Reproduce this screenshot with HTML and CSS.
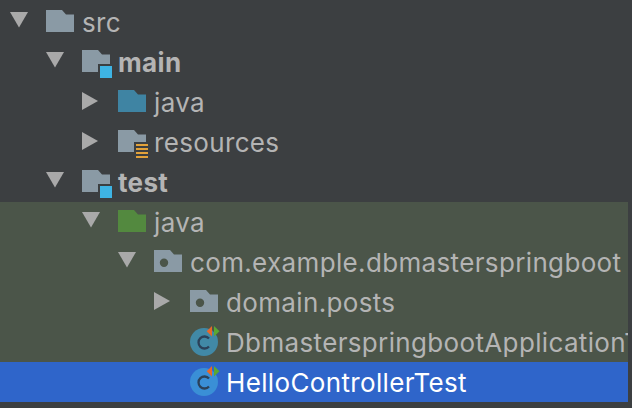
FILE: index.html
```html
<!DOCTYPE html>
<html lang="en">
<head>
  <meta charset="UTF-8" />
  <title>Project tree</title>
  <link rel="stylesheet" href="styles.css">
</head>
<body>
  <svg class="defs" width="0" height="0">
    <symbol id="arrow-down" viewBox="0 0 18 18"><path d="M0 0H18L9 15.5Z"/></symbol>
    <symbol id="arrow-right" viewBox="0 0 18 18"><path d="M0 0L16 9L0 18Z"/></symbol>
    <symbol id="folder" viewBox="0 0 28 22"><path d="M0 0H16L20 4.5H28V22H0Z"/></symbol>
    <symbol id="package" viewBox="0 0 28 22"><path fill-rule="evenodd" d="M0 0H16L20 4.5H28V22H0ZM10 8.5A4.2 4.2 0 1 0 10 16.9A4.2 4.2 0 1 0 10 8.5Z"/></symbol>
    <symbol id="class" viewBox="0 0 30 32">
      <circle cx="14" cy="16" r="14"/>
      <path d="M19 12.5A6 6 0 1 0 19 20.5" fill="none" stroke="#2b4159" stroke-width="2.3"/>
      <path d="M22 0V10.5L16.7 5.2Z" fill="#e8682a"/>
      <path d="M24 0L29.5 5.2L24 10.5Z" fill="#5aa832"/>
    </symbol>
  </svg>

  <ul class="tree">
    <li class="row depth-0">
      <svg class="arrow"><use href="#arrow-down"/></svg>
      <span class="icon">
        <svg class="folder-icon"><use href="#folder"/></svg>
      </span>
      <span class="label">src</span>
    </li>
    <li class="row depth-1">
      <svg class="arrow"><use href="#arrow-down"/></svg>
      <span class="icon">
        <svg class="folder-icon"><use href="#folder"/></svg>
        <span class="badge-module"></span>
      </span>
      <span class="label bold">main</span>
    </li>
    <li class="row depth-2">
      <svg class="arrow"><use href="#arrow-right"/></svg>
      <span class="icon">
        <svg class="folder-icon blue"><use href="#folder"/></svg>
      </span>
      <span class="label">java</span>
    </li>
    <li class="row depth-2">
      <svg class="arrow"><use href="#arrow-right"/></svg>
      <span class="icon">
        <svg class="folder-icon"><use href="#folder"/></svg>
        <span class="badge-resources"><i></i><i></i><i></i><i></i></span>
      </span>
      <span class="label">resources</span>
    </li>
    <li class="row depth-1">
      <svg class="arrow"><use href="#arrow-down"/></svg>
      <span class="icon">
        <svg class="folder-icon"><use href="#folder"/></svg>
        <span class="badge-module"></span>
      </span>
      <span class="label bold">test</span>
    </li>
    <li class="row depth-2 tinted">
      <svg class="arrow"><use href="#arrow-down"/></svg>
      <span class="icon">
        <svg class="folder-icon green"><use href="#folder"/></svg>
      </span>
      <span class="label">java</span>
    </li>
    <li class="row depth-3 tinted">
      <svg class="arrow"><use href="#arrow-down"/></svg>
      <span class="icon">
        <svg class="folder-icon"><use href="#package"/></svg>
      </span>
      <span class="label">com.example.dbmasterspringboot</span>
    </li>
    <li class="row depth-4 tinted">
      <svg class="arrow"><use href="#arrow-right"/></svg>
      <span class="icon">
        <svg class="folder-icon"><use href="#package"/></svg>
      </span>
      <span class="label">domain.posts</span>
    </li>
    <li class="row depth-4 tinted">
      <span class="arrow"></span>
      <span class="icon">
        <svg class="class-icon"><use href="#class"/></svg>
      </span>
      <span class="label">DbmasterspringbootApplicationTests</span>
    </li>
    <li class="row depth-4 selected">
      <span class="arrow"></span>
      <span class="icon">
        <svg class="class-icon"><use href="#class"/></svg>
      </span>
      <span class="label">HelloControllerTest</span>
    </li>
  </ul>
</body>
</html>
```

FILE: styles.css
```css
* {
  box-sizing: border-box;
  margin: 0;
  padding: 0;
}

body {
  width: 632px;
  height: 408px;
  overflow: hidden;
  background: #3c3f41;
  font-family: Inter, 'Liberation Sans', sans-serif;
  color: #b4b4b4;
}

.defs {
  display: block;
}

.tree {
  list-style: none;
  width: 628px;
  padding-top: 2px;
}

.row {
  display: flex;
  align-items: center;
  height: 40px;
  overflow: hidden;
  white-space: nowrap;
  font-size: 26px;
  letter-spacing: 0.35px;
}

.depth-0 { padding-left: 10px; }
.depth-1 { padding-left: 46px; }
.depth-2 { padding-left: 82px; }
.depth-3 { padding-left: 118px; }
.depth-4 { padding-left: 154px; }

.tinted {
  background: #4b5549;
}

.selected {
  background: #2f65ca;
  color: #fff;
}

.arrow {
  flex: none;
  width: 18px;
  height: 18px;
  margin-right: 18px;
  margin-bottom: 2px;
  fill: #a9a9a9;
}

.icon {
  flex: none;
  position: relative;
  width: 28px;
  height: 30px;
  margin-right: 8px;
  display: flex;
  align-items: center;
}

.folder-icon {
  width: 28px;
  height: 22px;
  margin-bottom: 2px;
  fill: #8a9aa5;
}

.folder-icon.blue { fill: #3f84a3; }
.folder-icon.green { fill: #53893f; }

.class-icon {
  flex: none;
  width: 30px;
  height: 32px;
  fill: #4189a6;
}

.selected .class-icon {
  fill: #3a8fd6;
}

.label.bold {
  font-weight: 700;
}

.badge-module {
  position: absolute;
  left: 18px;
  top: 19px;
  width: 12px;
  height: 12px;
  background: #3eb4e4;
  box-shadow: 0 0 0 2px #3c3f41;
}

.badge-resources {
  position: absolute;
  left: 18px;
  top: 17px;
  width: 12px;
  display: flex;
  flex-direction: column;
  gap: 2px;
  box-shadow: 0 0 0 2px #3c3f41;
  background: #3c3f41;
}

.badge-resources i {
  display: block;
  height: 2px;
  background: #e2a23a;
}
```
